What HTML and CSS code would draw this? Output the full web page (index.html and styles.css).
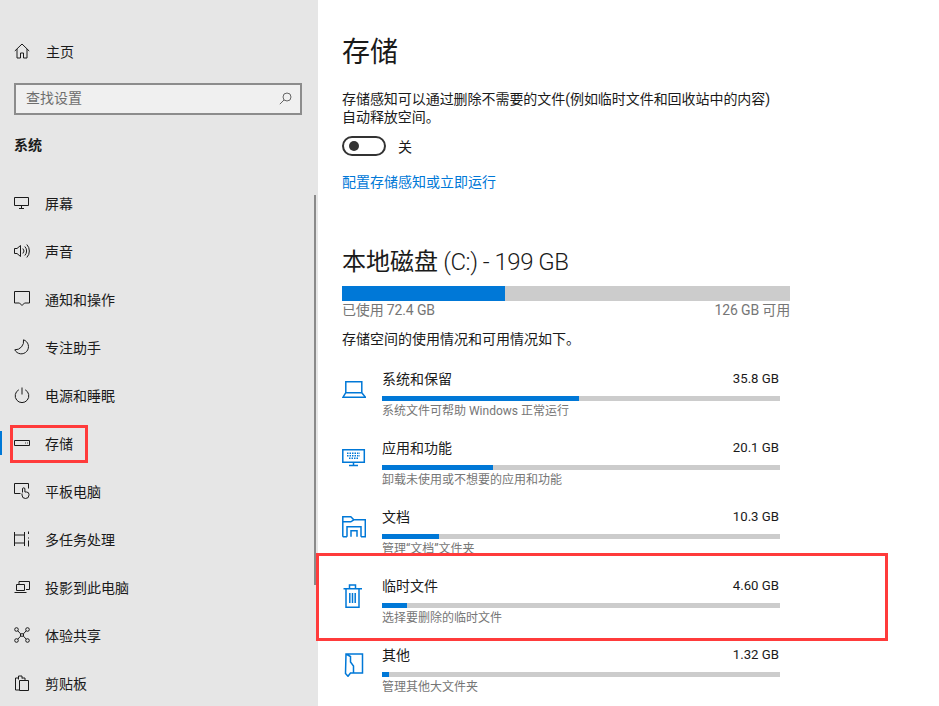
FILE: index.html
```html
<!DOCTYPE html>
<html lang="zh-CN">
<head>
<meta charset="utf-8">
<title>设置 - 存储</title>
<link rel="stylesheet" href="styles.css">
</head>
<body>
<div class="app">
  <aside class="sidebar">
    <div class="app-title"><span>设置</span></div>
    <div class="nav-row home">
      <svg class="nav-icon" viewBox="0 0 16 16"><path d="M.8 8 8 1l7.200 7M3 6v9h3.500v-5h3v5H13V6"/></svg>
      <span>主页</span>
    </div>
    <div class="search">
      <span>查找设置</span>
      <svg class="search-icon" viewBox="0 0 13 13"><circle cx="8" cy="5" r="4"/><path d="M5 8 .8 12.200"/></svg>
    </div>
    <div class="section-title">系统</div>
    <nav class="nav">
      <div class="nav-row">
        <svg class="nav-icon" viewBox="0 0 16 16"><path d="M.5 2.500h14v8H.5zM7.500 10.500v3M5 13.500h5"/></svg>
        <span>屏幕</span>
      </div>
      <div class="nav-row">
        <svg class="nav-icon" viewBox="0 0 16 16"><path d="M.5 5.500h2.500L6.500 2.500v11L3 10.500H.5zM8.800 5.500a3.500 3.500 0 0 1 0 5M10.800 3.500a6.500 6.500 0 0 1 0 9M12.800 1.500a9.500 9.500 0 0 1 0 13"/></svg>
        <span>声音</span>
      </div>
      <div class="nav-row">
        <svg class="nav-icon" viewBox="0 0 16 16"><path d="M.5 .5h15v11.500h-5L8 14.500 5.500 12h-5z"/></svg>
        <span>通知和操作</span>
      </div>
      <div class="nav-row">
        <svg class="nav-icon" viewBox="0 0 16 16"><path d="M9.500 .8A7.200 7.200 0 1 1 .8 10.800 8.500 8.500 0 0 0 9.500 .8z"/></svg>
        <span>专注助手</span>
      </div>
      <div class="nav-row">
        <svg class="nav-icon" viewBox="0 0 16 16"><path d="M4.800 2.800a6.800 6.800 0 1 0 6.400 0M8 .5v7"/></svg>
        <span>电源和睡眠</span>
      </div>
      <div class="nav-row selected">
        <svg class="nav-icon" viewBox="0 0 16 16"><path d="M.5 5.500h15v5H.5zM11 8h.8M13 8h.8"/></svg>
        <span>存储</span>
        <i class="mark"></i>
      </div>
      <div class="nav-row">
        <svg class="nav-icon" viewBox="0 0 16 16"><path d="M6.500 10.500h-6v-10h14v5M8.500 9.500V6a1.200 1.200 0 0 1 2.400 0v3h1.600a2.500 2.500 0 0 1 2.500 2.500V12a3.500 3.500 0 0 1-7 0v-1.500"/></svg>
        <span>平板电脑</span>
      </div>
      <div class="nav-row">
        <svg class="nav-icon" viewBox="0 0 16 16"><path d="M.5 1v3h10V1M.5 15v-3h10v3M.5 4v8M10.500 4v8M14.500 .5v2.500M14.500 6.500v1M14.500 9.500v6"/></svg>
        <span>多任务处理</span>
      </div>
      <div class="nav-row">
        <svg class="nav-icon" viewBox="0 0 16 16"><path d="M5 5V2.500h10.500v8H12M2.500 5.500h8v6h-8zM.5 13.500h12"/></svg>
        <span>投影到此电脑</span>
      </div>
      <div class="nav-row">
        <svg class="nav-icon" viewBox="0 0 16 16"><circle cx="2.500" cy="2.500" r="1.800"/><circle cx="13.500" cy="2.500" r="1.800"/><circle cx="2.500" cy="13.500" r="1.800"/><circle cx="13.500" cy="13.500" r="1.800"/><path d="M3.800 3.800l2.700 3 3 0 2.700-3M3.800 12.200l2.700-3 3 0 2.700 3M6.500 6.800v2.400M9.500 6.800v2.400"/></svg>
        <span>体验共享</span>
      </div>
      <div class="nav-row">
        <svg class="nav-icon" viewBox="0 0 16 16"><path d="M4.500 3H1.500v12h4M4.500 4.500V1h1.500M6 1h2v2.500M8 3h3v2.500M5.500 5.500h9v10h-9z"/></svg>
        <span>剪贴板</span>
      </div>
    </nav>
    <div class="scroll-thumb"></div>
  </aside>

  <main class="main">
    <h1 class="page-title">存储</h1>
    <p class="intro">存储感知可以通过删除不需要的文件(例如临时文件和回收站中的内容)<br>自动释放空间。</p>
    <div class="toggle-row">
      <span class="toggle"><i class="knob"></i></span>
      <span>关</span>
    </div>
    <a class="link">配置存储感知或立即运行</a>

    <h2 class="disk-title">本地磁盘<span class="disk-size"> (C:) - 199 GB</span></h2>
    <div class="disk-bar"><div class="fill" style="width:163px"></div></div>
    <div class="disk-labels"><span>已使用 72.4 GB</span><span>126 GB 可用</span></div>
    <p class="usage-note">存储空间的使用情况和可用情况如下。</p>

    <div class="rows">
      <div class="row">
        <svg class="row-icon" viewBox="0 0 24 24"><path d="M3.800 4.700h16v11h-16zM3.800 15.700 1 20.200h22.500l-3.700-4.500"/></svg>
        <div class="row-body">
          <div class="row-head"><span>系统和保留</span><span class="value">35.8 GB</span></div>
          <div class="row-bar"><div class="fill" style="width:197px"></div></div>
          <div class="row-desc">系统文件可帮助 Windows 正常运行</div>
        </div>
      </div>
      <div class="row">
        <svg class="row-icon" viewBox="0 0 24 24"><path d="M.8 3.800h21.500v12.500H.8zM11.500 16.300v3M7 19.500h9"/><path class="dots" d="M5 7.300h13M5 9.800h13M7 12.300h9"/></svg>
        <div class="row-body">
          <div class="row-head"><span>应用和功能</span><span class="value">20.1 GB</span></div>
          <div class="row-bar"><div class="fill" style="width:111px"></div></div>
          <div class="row-desc">卸载未使用或不想要的应用和功能</div>
        </div>
      </div>
      <div class="row">
        <svg class="row-icon" viewBox="0 0 24 24"><path d="M.8 21.800V1.800h8l3 3h11.500v17H19M.8 21.800H5M.8 6.800h8l3-2M5 21.800V11.800h14v10M9 21.800v-6h6v6"/></svg>
        <div class="row-body">
          <div class="row-head"><span>文档</span><span class="value">10.3 GB</span></div>
          <div class="row-bar"><div class="fill" style="width:57px"></div></div>
          <div class="row-desc">管理“文档”文件夹</div>
        </div>
      </div>
      <div class="row highlighted">
        <svg class="row-icon" viewBox="0 0 24 24"><path d="M1.500 4.700h18.500M7.500 4.500V1h6v3.500M4 4.700v18.500h13V4.700M7.800 9v10M10.500 9v10M13.200 9v10"/></svg>
        <div class="row-body">
          <div class="row-head"><span>临时文件</span><span class="value">4.60 GB</span></div>
          <div class="row-bar"><div class="fill" style="width:25px"></div></div>
          <div class="row-desc">选择要删除的临时文件</div>
        </div>
      </div>
      <div class="row">
        <svg class="row-icon" viewBox="0 0 24 24"><path d="M4 1h16.500v19H8.500l-2.500 3.300-2.500-2.800zM4 1l4.500 2.500V9l3 4v7"/></svg>
        <div class="row-body">
          <div class="row-head"><span>其他</span><span class="value">1.32 GB</span></div>
          <div class="row-bar"><div class="fill" style="width:7px"></div></div>
          <div class="row-desc">管理其他大文件夹</div>
        </div>
      </div>
    </div>
  </main>
</div>
</body>
</html>
```
FILE: styles.css
```css
* { box-sizing: border-box; }

html, body {
  margin: 0;
  height: 706px;
  overflow: hidden;
  background: #fff;
}

body {
  font-family: Roboto, "Noto Sans CJK SC", sans-serif;
  font-size: 14px;
  color: #1a1a1a;
}

.app {
  display: flex;
  height: 706px;
  overflow: hidden;
}

/* Sidebar */
.sidebar {
  position: relative;
  flex: 0 0 318px;
  height: 706px;
  overflow: hidden;
  background: #e6e6e6;
  padding-left: 14px;
}

.app-title {
  height: 2px;
  padding-left: 48px;
  overflow: hidden;
  display: flex;
  align-items: flex-end;
  line-height: 14px;
}

.app-title span {
  flex: none;
  font-size: 11px;
}

.nav-row {
  position: relative;
  display: flex;
  align-items: center;
  gap: 15px;
  height: 48px;
  white-space: nowrap;
}

.home {
  gap: 16px;
  margin-top: 25px;
}

.nav-icon {
  flex: none;
  width: 16px;
  height: 16px;
  fill: none;
  stroke: #1a1a1a;
  stroke-width: 1;
}

.search {
  display: flex;
  align-items: center;
  justify-content: space-between;
  width: 288px;
  height: 32px;
  margin-top: 8px;
  padding: 0 8px 5px 10px;
  background: #f0f0f0;
  border: 2px solid #8c8c8c;
  color: #6e6e6e;
}

.search-icon {
  flex: none;
  width: 13px;
  height: 13px;
  margin-bottom: -3px;
  fill: none;
  stroke: #666;
  stroke-width: 1;
}

.section-title {
  margin-top: 20px;
  height: 20px;
  line-height: 20px;
  font-weight: 700;
  font-size: 14px;
}

.nav {
  margin-top: 24px;
}

.selected .mark {
  position: absolute;
  left: -4px;
  top: 6px;
  width: 78px;
  height: 38px;
  border: 3px solid #ff3b3b;
}

.selected::before {
  content: "";
  position: absolute;
  left: -14px;
  top: 12px;
  width: 2px;
  height: 24px;
  background: #0078d7;
}

.scroll-thumb {
  position: absolute;
  left: 314px;
  top: 195px;
  width: 2px;
  height: 390px;
  background: #8a8a8a;
}

/* Main */
.main {
  flex: 1;
  height: 706px;
  padding: 33px 149px 0 24px;
}

.page-title {
  margin: 0;
  font-size: 28px;
  line-height: 40px;
  font-weight: 400;
}

.intro {
  margin: 17px 0 0;
  line-height: 18px;
  letter-spacing: -0.05px;
  white-space: nowrap;
}

.toggle-row {
  display: flex;
  align-items: center;
  gap: 12px;
  height: 20px;
  margin-top: 10px;
}

.toggle {
  display: flex;
  align-items: center;
  width: 44px;
  height: 20px;
  padding-left: 5px;
  border: 2px solid #333;
  border-radius: 10px;
}

.knob {
  width: 10px;
  height: 10px;
  border-radius: 50%;
  background: #333;
}

.link {
  display: block;
  margin-top: 16px;
  line-height: 20px;
  color: #0078d7;
}

.disk-title {
  margin: 54px 0 0;
  font-size: 24px;
  line-height: 32px;
  font-weight: 400;
  white-space: nowrap;
}

.disk-size {
  font-weight: 300;
  letter-spacing: -0.5px;
}

.disk-bar {
  height: 15px;
  margin-top: 8px;
  background: #ccc;
}

.fill {
  height: 100%;
  background: #0078d7;
}

.disk-labels {
  display: flex;
  justify-content: space-between;
  height: 18px;
  line-height: 18px;
  letter-spacing: -0.15px;
  color: #767676;
}

.usage-note {
  margin: 10px 0 0;
  line-height: 20px;
}

.rows {
  margin-top: 20px;
}

.row {
  display: flex;
  gap: 16px;
  height: 69px;
  width: 438px;
}

.row-icon {
  flex: none;
  width: 24px;
  height: 24px;
  margin-top: 8px;
  fill: none;
  stroke: #0078d7;
  stroke-width: 1.5;
}

.row-icon .dots {
  stroke-dasharray: 1.5 1;
}

.row-body {
  flex: 1;
}

.row-head {
  display: flex;
  justify-content: space-between;
  height: 20px;
  line-height: 20px;
  padding-right: 1px;
}

.value {
  font-size: 13.2px;
}

.row-bar {
  height: 5px;
  margin-top: 7px;
  background: #ccc;
}

.row-desc {
  margin-top: 2px;
  font-size: 12px;
  line-height: 16px;
  color: #767676;
  white-space: nowrap;
}

.highlighted {
  position: relative;
  z-index: 1;
  isolation: isolate;
}

.highlighted::before {
  content: "";
  position: absolute;
  z-index: -1;
  left: -26px;
  right: -108px;
  top: -23px;
  bottom: 4px;
  background: #fff;
  border: 3px solid #ff3b3b;
}
```
